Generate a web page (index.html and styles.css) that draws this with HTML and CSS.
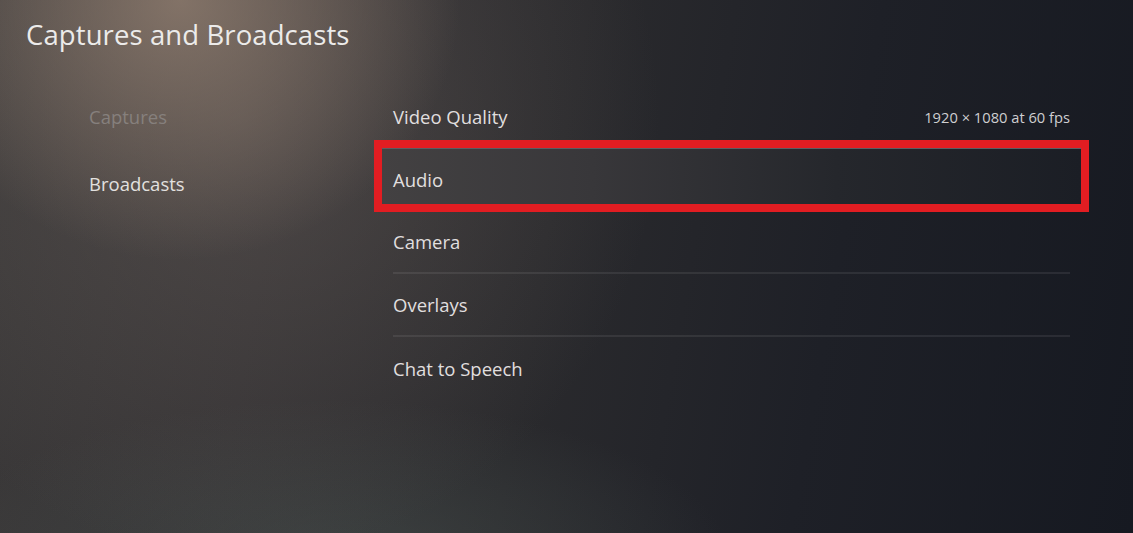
FILE: index.html
```html
<!DOCTYPE html>
<html lang="en">
<head>
<meta charset="utf-8">
<title>Captures and Broadcasts</title>
<link rel="stylesheet" href="styles.css">
</head>
<body>
<div class="screen">
  <header class="header">
    <h1 class="title">Captures and Broadcasts</h1>
  </header>
  <main class="main">
    <nav class="sidebar">
      <div class="side-item dim">Captures</div>
      <div class="side-item">Broadcasts</div>
    </nav>
    <section class="list">
      <div class="row"><span>Video Quality</span><span class="value">1920 × 1080 at 60 fps</span></div>
      <div class="row focus"><span>Audio</span></div>
      <div class="row sep"><span>Camera</span></div>
      <div class="row sep"><span>Overlays</span></div>
      <div class="row"><span>Chat to Speech</span></div>
    </section>
  </main>
</div>
</body>
</html>
```

FILE: styles.css
```css
* { box-sizing: border-box; }
html, body { margin: 0; padding: 0; }
body {
  width: 1133px;
  height: 533px;
  overflow: hidden;
  font-family: "Open Sans", "Noto Sans", sans-serif;
  color: #dedcdb;
}
.screen {
  width: 1133px;
  height: 533px;
  background:
    radial-gradient(ellipse 280px 260px at 180px 0px, rgba(150,130,115,0.75), rgba(150,130,115,0) 100%),
    radial-gradient(ellipse 420px 440px at 240px 120px, rgba(110,100,95,0.45), rgba(110,100,95,0) 100%),
    radial-gradient(ellipse 400px 160px at 330px 560px, rgba(75,85,82,0.5), rgba(75,85,82,0) 100%),
    linear-gradient(100deg, #3c3a3a 0%, #343234 25%, #2a2a2d 48%, #1e2027 72%, #161921 100%);
  display: flex;
  flex-direction: column;
}
.header {
  padding: 16px 26px 0;
}
.title {
  margin: 0;
  font-size: 27.5px;
  font-weight: 400;
  line-height: 38px;
  color: #ecebea;
  letter-spacing: 0.1px;
}
.main {
  display: flex;
  padding-top: 31px;
}
.sidebar {
  width: 393px;
  padding-left: 89px;
  margin-top: -2px;
  display: flex;
  flex-direction: column;
}
.side-item {
  height: 67px;
  display: flex;
  align-items: center;
  font-size: 18.5px;
  color: #e2e0df;
}
.side-item.dim { color: #86807d; }
.list {
  width: 677px;
  display: flex;
  flex-direction: column;
}
.row {
  position: relative;
  height: 63px;
  display: flex;
  align-items: center;
  justify-content: space-between;
  font-size: 18.5px;
  color: #e0dfdf;
}
.row span { position: relative; z-index: 2; }
.row.sep { border-bottom: 2px solid rgba(255,255,255,0.08); }
.value {
  font-size: 14.7px;
  color: #cfcfd1;
}
.focus::before {
  content: "";
  position: absolute;
  top: -1px;
  bottom: 7px;
  left: -11px;
  right: -12px;
  background: linear-gradient(90deg, #434142 0%, #38373a 30%, #25272c 65%, #1b1e25 100%);
  border-top: 2px solid #5d5d62;
  z-index: 1;
}
.focus::after {
  content: "";
  position: absolute;
  top: -8px;
  bottom: -1px;
  left: -19px;
  right: -19px;
  border: 8px solid #e21d22;
  z-index: 3;
}
```
